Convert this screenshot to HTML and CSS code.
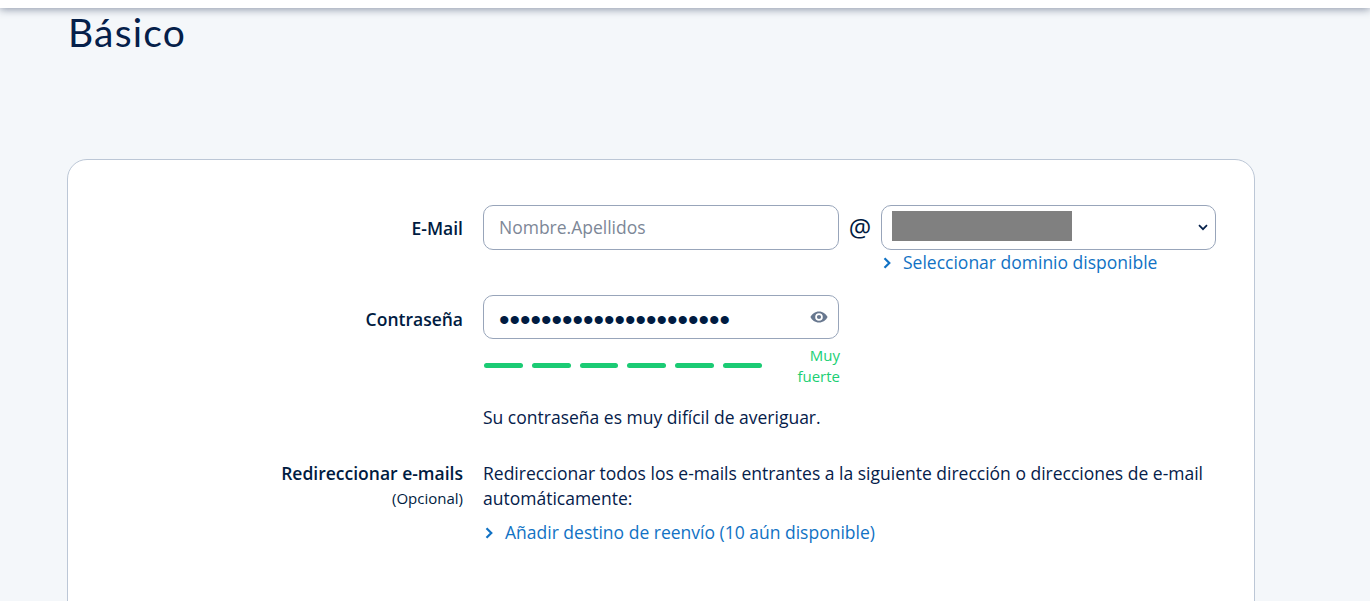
FILE: index.html
```html
<!DOCTYPE html>
<html lang="es">
<head>
<meta charset="utf-8">
<title>Básico</title>
<link rel="stylesheet" href="styles.css">
</head>
<body>
<div class="topbar"></div>
<main class="page">
  <h1 class="title">Básico</h1>
  <section class="card">
    <div class="row row-email">
      <div class="label"><strong>E-Mail</strong></div>
      <div class="control">
        <div class="email-line">
          <div class="field field-name"><span class="placeholder">Nombre.Apellidos</span></div>
          <span class="at">@</span>
          <div class="domain">
            <div class="field field-domain">
              <span class="redacted"></span>
              <svg class="caret" width="10" height="7" viewBox="0 0 10 7" aria-hidden="true"><path d="M1 1.2 5 5.2 9 1.2" fill="none" stroke="#05204a" stroke-width="1.7"/></svg>
            </div>
            <a class="link link-domain" href="#"><svg class="chev" width="9" height="12" viewBox="0 0 9 12" aria-hidden="true"><path d="M1.5 1.2 6.300 6 1.500 10.800" fill="none" stroke="#1172c4" stroke-width="2.2"/></svg>Seleccionar dominio disponible</a>
          </div>
        </div>
      </div>
    </div>
    <div class="row row-pass">
      <div class="label"><strong>Contraseña</strong></div>
      <div class="control">
        <div class="field field-pass">
          <span class="dots">••••••••••••••••••••••</span>
          <svg class="eye" width="18" height="12" viewBox="0 0 18 12" aria-hidden="true"><path fill-rule="evenodd" fill="#68788f" d="M9 0.5C5 0.5 1.9 3 0.4 6 1.9 9 5 11.5 9 11.5S16.1 9 17.600 6C16.1 3 13 0.5 9 0.5ZM9 2.200A3.800 3.800 0 1 1 9 9.800 3.800 3.800 0 0 1 9 2.200ZM9 3.900A2.100 2.100 0 1 0 9 8.100 2.100 2.100 0 0 0 9 3.900Z"/></svg>
        </div>
        <div class="strength">
          <div class="bars"><i></i><i></i><i></i><i></i><i></i><i></i></div>
          <div class="strength-text">Muy<br>fuerte</div>
        </div>
        <p class="hint">Su contraseña es muy difícil de averiguar.</p>
      </div>
    </div>
    <div class="row row-forward">
      <div class="label"><strong>Redireccionar e-mails</strong><small>(Opcional)</small></div>
      <div class="control">
        <p class="desc">Redireccionar todos los e-mails entrantes a la siguiente dirección o direcciones de e-mail automáticamente:</p>
        <a class="link link-forward" href="#"><svg class="chev" width="9" height="12" viewBox="0 0 9 12" aria-hidden="true"><path d="M1.5 1.2 6.300 6 1.500 10.800" fill="none" stroke="#1172c4" stroke-width="2.2"/></svg>Añadir destino de reenvío (10 aún disponible)</a>
      </div>
    </div>
  </section>
</main>
</body>
</html>
```
FILE: styles.css
```css
* { box-sizing: border-box; }
html, body { margin: 0; height: 601px; overflow: hidden; }
body {
  background: #f4f7fa;
  color: #05204a;
  font-family: "Open Sans", "Liberation Sans", sans-serif;
  font-size: 17.5px;
  line-height: 25px;
}
.topbar {
  height: 8px;
  background: #fff;
  box-shadow: 0 1px 8px rgba(50, 65, 95, .6);
  position: relative;
}
.page { padding-left: 67px; }
.title {
  margin: 0;
  padding-left: 1px;
  height: 151px;
  padding-top: 1px;
  font-family: Lato, "Liberation Sans", sans-serif;
  font-size: 39px;
  line-height: 46px;
  font-weight: 400;
  letter-spacing: 1.2px;
  color: #05204a;
}
.card {
  width: 1188px;
  height: 560px;
  background: #fff;
  border: 1px solid #bcc7d6;
  border-radius: 20px;
  padding: 45px 0 0;
}
.row { display: grid; grid-template-columns: 395px 1fr; column-gap: 20px; }
.label { text-align: right; color: #001b41; }
.label strong { display: block; font-weight: 600; }
.label small { display: block; font-size: 15px; line-height: 24px; }
.row-email .label { padding-top: 11px; }
.row-pass { margin-top: 20px; }
.row-pass .label { padding-top: 12px; }
.row-forward { margin-top: 31px; }
.field {
  display: flex;
  align-items: center;
  background: #fff;
  border: 1px solid #98a5ba;
  border-radius: 10px;
}
.email-line { display: flex; align-items: flex-start; }
.field-name { width: 356px; height: 45px; padding-left: 15px; }
.placeholder { color: #7d8797; }
.at { width: 42px; text-align: center; font-size: 25px; line-height: 45px; font-weight: 500; color: #001b41; }
.domain { width: 335px; }
.field-domain { height: 45px; padding: 0 7px 0 10px; justify-content: space-between; }
.redacted { display: block; width: 180px; height: 30px; margin-bottom: 3px; background: #808080; }
.link { color: #1172c4; text-decoration: none; display: flex; align-items: center; }
.chev { flex: none; }
.link-domain { height: 25px; gap: 11px; padding-left: 2px; }
.field-pass { width: 356px; height: 44px; padding: 0 10px 0 15px; justify-content: space-between; }
.dots { font-family: "Liberation Sans", sans-serif; font-size: 30px; line-height: 36px; margin-top: 6px; color: #001b41; }
.strength { width: 357px; display: flex; margin-top: 6px; height: 42px; }
.bars { display: flex; gap: 9px; width: 279px; padding: 18px 0 0 1px; }
.bars i { display: block; width: 39px; height: 5px; border-radius: 3px; background: #1bcb74; }
.strength-text { flex: 1; text-align: right; font-size: 15px; line-height: 21px; color: #1bcf74; }
.hint { margin: 18px 0 0; }
.desc { margin: 0; width: 730px; }
.link-forward { margin-top: 9px; height: 25px; gap: 11px; padding-left: 2px; }
```
